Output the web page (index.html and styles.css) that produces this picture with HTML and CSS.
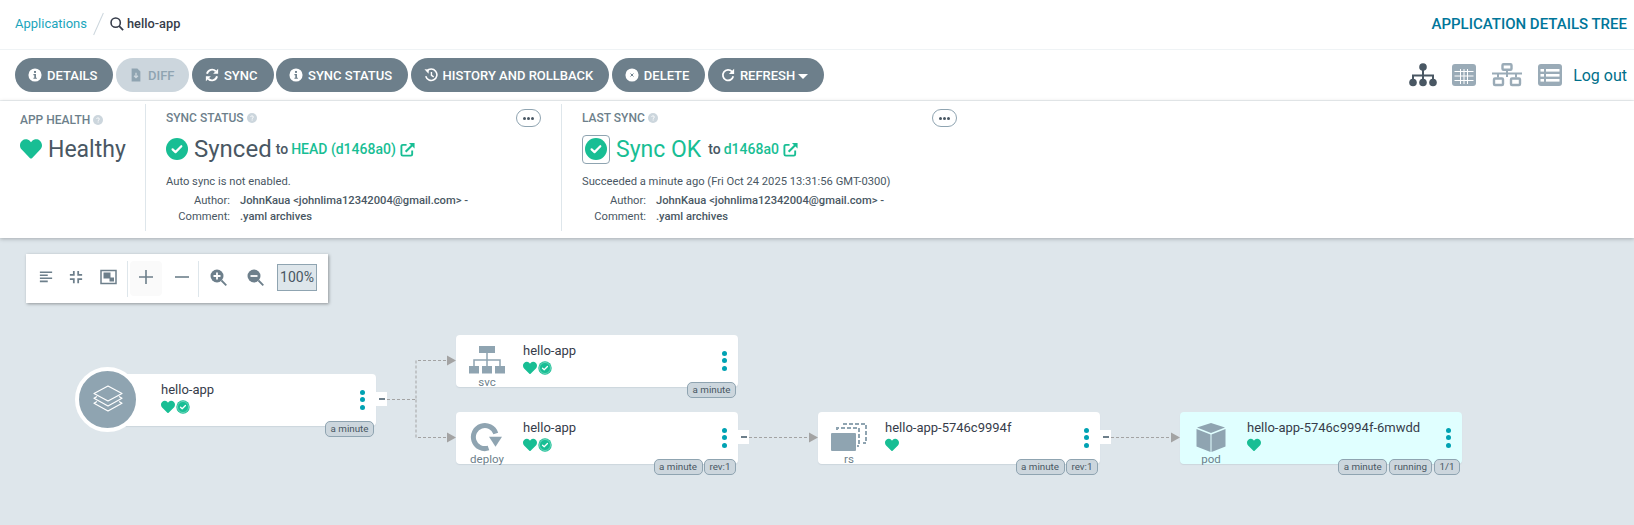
FILE: index.html
```html
<!DOCTYPE html>
<html lang="en">
<head>
  <meta charset="UTF-8">
  <title>hello-app</title>
  <link rel="stylesheet" href="styles.css">
</head>
<body>

  <svg class="defs" width="0" height="0">
    <defs>
      <symbol id="heart" viewBox="0 0 512 512"><path d="M462.3 62.6C407.5 15.9 326 24.3 275.7 76.2L256 96.5l-19.7-20.3C186.1 24.3 104.5 15.9 49.7 62.6c-62.8 53.6-66.1 149.8-9.9 207.9l193.5 199.8c12.5 12.9 32.8 12.9 45.3 0l193.5-199.8c56.3-58.1 53-154.3-9.8-207.9z"/></symbol>
      <symbol id="check" viewBox="0 0 24 24"><circle cx="12" cy="12" r="12" fill="#18be94"/><path d="M7.2 12.4l3.2 3 6.3-6.4" fill="none" stroke="#fff" stroke-width="2.4" stroke-linecap="round" stroke-linejoin="round"/></symbol>
      <symbol id="info" viewBox="0 0 16 16"><circle cx="8" cy="8" r="7.5" fill="#fff"/><rect x="6.9" y="3.4" width="2.2" height="2.2" fill="#6d7f8b"/><path d="M6.2 6.8h2.9v4.2h1v1.4H6.2V11h1V8.2h-1z" fill="#6d7f8b"/></symbol>
      <symbol id="help" viewBox="0 0 16 16"><circle cx="8" cy="8" r="8" fill="#ccd6dd"/><path d="M5.8 6.4C6 5 7 4.6 8 4.6c1.300 0 2.200.8 2.200 1.800 0 1.500-2 1.500-2 3" fill="none" stroke="#fff" stroke-width="1.400"/><rect x="7.400" y="10.400" width="1.600" height="1.600" fill="#fff"/></symbol>
      <symbol id="external" viewBox="0 0 16 16"><path d="M7 3H3a1.500 1.500 0 0 0-1.500 1.500v8.500A1.500 1.500 0 0 0 3 14.500h8.500A1.500 1.500 0 0 0 13 13V9" fill="none" stroke="currentColor" stroke-width="2"/><path d="M6 10.500L13.500 3" stroke="currentColor" stroke-width="2.200"/><path d="M9.500 1h6v6z" fill="currentColor"/></symbol>
      <symbol id="tree-status" viewBox="0 0 24 24"><circle cx="12" cy="12" r="11.500" fill="#18be94"/><circle cx="12" cy="12" r="9.500" fill="none" stroke="#fff" stroke-width=".6"/><path d="M7.800 12.400l2.800 2.600 5.600-5.600" fill="none" stroke="#fff" stroke-width="2.200" stroke-linecap="round" stroke-linejoin="round"/></symbol>
    </defs>
  </svg>

  <div class="top-bar">
    <div class="crumbs">
      <a class="crumb-link">Applications</a>
      <span class="crumb-slash"></span>
      <svg class="search-icon" viewBox="0 0 16 16"><circle cx="6.500" cy="6.500" r="5.300" fill="none" stroke="#363c4a" stroke-width="1.800"/><path d="M10.500 10.500l4.500 4.500" stroke="#363c4a" stroke-width="2"/></svg>
      <span class="crumb-app">hello-app</span>
    </div>
    <div class="page-title">APPLICATION DETAILS TREE</div>
  </div>

  <div class="toolbar">
    <div class="actions">
      <button class="btn"><svg class="btn-icon"><use href="#info"/></svg>DETAILS</button>
      <button class="btn btn-off">
        <svg class="btn-icon" viewBox="0 0 16 16"><path d="M3 .5h6.500L13 4v11.500H3z" fill="#8fa4b1"/><path d="M8 5.500v5M5.800 8.800L8 11l2.200-2.200" fill="none" stroke="#ccd6dd" stroke-width="1.500"/></svg>DIFF</button>
      <button class="btn">
        <svg class="btn-icon" viewBox="0 0 16 16"><path d="M2.300 6.600A5.900 5.900 0 0 1 12.300 3.700" fill="none" stroke="#fff" stroke-width="2.200"/><path d="M15 .8v5.700H9.300z" fill="#fff"/><path d="M13.700 9.400A5.900 5.900 0 0 1 3.700 12.300" fill="none" stroke="#fff" stroke-width="2.200"/><path d="M1 15.200V9.500h5.700z" fill="#fff"/></svg>SYNC</button>
      <button class="btn"><svg class="btn-icon"><use href="#info"/></svg>SYNC STATUS</button>
      <button class="btn">
        <svg class="btn-icon" viewBox="0 0 16 16"><path d="M3.200 3.600A6.500 6.500 0 1 1 2 9.500" fill="none" stroke="#fff" stroke-width="1.800"/><path d="M.5 1.500l5 .3-.3 4.700z" fill="#fff"/><path d="M8.500 4.500v4l2.600 1.700" fill="none" stroke="#fff" stroke-width="1.600"/></svg>HISTORY AND ROLLBACK</button>
      <button class="btn">
        <svg class="btn-icon" viewBox="0 0 16 16"><circle cx="8" cy="8" r="7.500" fill="#fff"/><path d="M6.300 6.300l3.400 3.400M9.700 6.300l-3.400 3.400" stroke="#6d7f8b" stroke-width="1.100"/></svg>DELETE</button>
      <button class="btn">
        <svg class="btn-icon" viewBox="0 0 16 16"><path d="M12.600 4.200A6 6 0 1 0 14 9.500" fill="none" stroke="#fff" stroke-width="2"/><path d="M15 .8v6H9z" fill="#fff"/></svg>REFRESH<span class="caret"></span></button>
    </div>
    <div class="views">
      <svg class="view-icon view-tree" viewBox="0 0 28 24"><g fill="#495763"><circle cx="14" cy="4" r="3.800"/><circle cx="4" cy="19.500" r="3.800"/><circle cx="14" cy="19.500" r="3.800"/><circle cx="24" cy="19.500" r="3.800"/></g><path d="M14 6v12M4 18v-5.500h20V18" fill="none" stroke="#495763" stroke-width="2"/></svg>
      <svg class="view-icon view-grid" viewBox="0 0 24 22"><rect width="24" height="22" rx="3" fill="#9aabb7"/><path d="M2.500 7.500h19M2.500 12h19M2.500 16.500h19M8.500 5v15M12 5v15M15.500 5v15" stroke="#fff" stroke-width="1"/></svg>
      <svg class="view-icon view-net" viewBox="0 0 30 24"><path d="M15 8v6M0 10.500h30M6 10.500v4M24 10.500v4" stroke="#9aabb7" stroke-width="2"/><g fill="none" stroke="#9aabb7" stroke-width="2.400"><rect x="10.500" y="1.200" width="9" height="5.500" rx="1"/><rect x="2" y="15.500" width="9" height="6.500" rx="1"/><rect x="19" y="15.500" width="9" height="6.500" rx="1"/></g></svg>
      <svg class="view-icon view-list" viewBox="0 0 24 22"><rect width="24" height="22" rx="3" fill="#9aabb7"/><g fill="#fff"><rect x="2.500" y="5" width="3.500" height="2.600"/><rect x="2.500" y="10" width="3.500" height="2.600"/><rect x="2.500" y="15" width="3.500" height="2.600"/><rect x="8" y="5" width="13.500" height="2.600"/><rect x="8" y="10" width="13.500" height="2.600"/><rect x="8" y="15" width="13.500" height="2.600"/></g></svg>
      <a class="logout">Log out</a>
    </div>
  </div>

  <div class="summary">
    <div class="panel panel-health">
      <div class="panel-label">APP HEALTH <svg class="help-icon"><use href="#help"/></svg></div>
      <div class="status-line">
        <svg class="health-heart"><use href="#heart"/></svg>
        <span class="status-big status-healthy">Healthy</span>
      </div>
    </div>

    <div class="panel panel-sync">
      <div class="panel-label">SYNC STATUS <svg class="help-icon"><use href="#help"/></svg></div>
      <button class="more-btn"><i></i><i></i><i></i></button>
      <div class="status-line">
        <svg class="status-check"><use href="#check"/></svg>
        <span class="status-big">Synced</span>
        <span class="status-to">to</span>
        <a class="status-link">HEAD (d1468a0)</a>
        <svg class="ext-icon"><use href="#external"/></svg>
      </div>
      <div class="status-note">Auto sync is not enabled.</div>
      <div class="meta">
        <span class="meta-key">Author:</span><span class="meta-val">JohnKaua &lt;johnlima12342004@gmail.com&gt; -</span>
        <span class="meta-key">Comment:</span><span class="meta-val">.yaml archives</span>
      </div>
    </div>

    <div class="panel panel-last">
      <div class="panel-label">LAST SYNC <svg class="help-icon"><use href="#help"/></svg></div>
      <button class="more-btn"><i></i><i></i><i></i></button>
      <div class="status-line">
        <span class="check-box"><svg class="status-check"><use href="#check"/></svg></span>
        <span class="status-big status-ok">Sync OK</span>
        <span class="status-to">to</span>
        <a class="status-link">d1468a0</a>
        <svg class="ext-icon"><use href="#external"/></svg>
      </div>
      <div class="status-note">Succeeded a minute ago (Fri Oct 24 2025 13:31:56 GMT-0300)</div>
      <div class="meta">
        <span class="meta-key">Author:</span><span class="meta-val">JohnKaua &lt;johnlima12342004@gmail.com&gt; -</span>
        <span class="meta-key">Comment:</span><span class="meta-val">.yaml archives</span>
      </div>
    </div>
  </div>

  <div class="canvas">
    <div class="graph-tools">
      <svg class="tool-icon" viewBox="0 0 16 16"><path d="M1 2.500h14M1 6h9M1 9.500h14M1 13h9" stroke="#6d7f8b" stroke-width="1.800"/></svg>
      <svg class="tool-icon tool-compress" viewBox="0 0 16 16"><path d="M5.500 1v4.500H1M10.500 1v4.500H15M5.500 15v-4.500H1M10.500 15v-4.500H15" fill="none" stroke="#6d7f8b" stroke-width="2"/></svg>
      <svg class="tool-icon tool-fit" viewBox="0 0 18 16"><rect x="1.500" y="1.500" width="15" height="13" fill="none" stroke="#6d7f8b" stroke-width="1.500"/><rect x="4" y="3.500" width="7" height="6" fill="#6d7f8b"/><rect x="10" y="8.500" width="4.500" height="4" fill="#6d7f8b"/></svg>
      <span class="tool-sep"></span>
      <span class="tool-plus"><svg class="tool-icon" viewBox="0 0 14 14"><path d="M7 0v14M0 7h14" stroke="#6d7f8b" stroke-width="1.600"/></svg></span>
      <span class="tool-minus"><svg class="tool-icon" viewBox="0 0 14 14"><path d="M0 7h14" stroke="#6d7f8b" stroke-width="1.600"/></svg></span>
      <span class="tool-sep"></span>
      <svg class="tool-icon tool-zoom" viewBox="0 0 17 17"><circle cx="7" cy="7" r="6.500" fill="#6d7f8b"/><path d="M11.500 11.500l4.800 4.800" stroke="#6d7f8b" stroke-width="1.800"/><path d="M3.500 7h7M7 3.500v7" stroke="#fff" stroke-width="1.800"/></svg>
      <svg class="tool-icon tool-zoom tool-zoom-out" viewBox="0 0 17 17"><circle cx="7" cy="7" r="6.500" fill="#6d7f8b"/><path d="M11.500 11.500l4.800 4.800" stroke="#6d7f8b" stroke-width="1.800"/><path d="M3.500 7h7" stroke="#fff" stroke-width="1.800"/></svg>
      <span class="zoom-level">100%</span>
    </div>

    <svg class="edges" width="1634" height="287" viewBox="0 238 1634 287">
      <g class="edge-lines">
        <path d="M387 399.500H416V360.500H448"/>
        <path d="M416 399.500V437.500H448"/>
        <path d="M749 437.500H810"/>
        <path d="M1111 437.500H1172"/>
      </g>
      <g class="edge-heads">
        <path d="M447 355.500l9 5-9 5z"/>
        <path d="M447 432.500l9 5-9 5z"/>
        <path d="M809 432.500l9 5-9 5z"/>
        <path d="M1171 432.500l9 5-9 5z"/>
      </g>
    </svg>

    <div class="node node-app">
      <div class="app-circle">
        <svg class="app-layers" viewBox="0 0 32 30"><g fill="none" stroke="#fff" stroke-width="1.200" stroke-linejoin="round"><path d="M16 1L30 8.500 16 16 2 8.500z"/><path d="M5 11.500l-3 1.800L16 21l14-7.700-3-1.800"/><path d="M5 16.500l-3 1.800L16 26l14-7.700-3-1.800"/></g></svg>
      </div>
      <div class="node-text">
        <div class="node-name">hello-app</div>
        <div class="node-status"><svg class="mini-heart"><use href="#heart"/></svg><svg class="mini-check"><use href="#tree-status"/></svg></div>
      </div>
      <div class="node-dots"><i></i><i></i><i></i></div>
      <span class="collapse"></span>
      <div class="tags"><span class="tag">a minute</span></div>
    </div>

    <div class="node node-svc">
      <div class="node-kind">
        <svg class="kind-icon" viewBox="0 0 36 29"><rect x="10" y="0" width="16" height="7" fill="#8fa4b1"/><path d="M18 7v7M5 21v-7h26v7M18 14v7" fill="none" stroke="#8fa4b1" stroke-width="1.500"/><rect x="0" y="20" width="10" height="7.500" fill="#8fa4b1"/><rect x="13" y="20" width="10" height="7.500" fill="#8fa4b1"/><rect x="26" y="20" width="10" height="7.500" fill="#8fa4b1"/></svg>
        <span class="kind-label">svc</span>
      </div>
      <div class="node-text">
        <div class="node-name">hello-app</div>
        <div class="node-status"><svg class="mini-heart"><use href="#heart"/></svg><svg class="mini-check"><use href="#tree-status"/></svg></div>
      </div>
      <div class="node-dots"><i></i><i></i><i></i></div>
      <div class="tags"><span class="tag">a minute</span></div>
    </div>

    <div class="node node-deploy">
      <div class="node-kind">
        <svg class="kind-icon" viewBox="0 0 36 29"><path d="M26.800 10.500A11.500 11.500 0 1 0 19.500 25" fill="none" stroke="#8fa4b1" stroke-width="5"/><path d="M20 13.700h13l-6.500 10z" fill="#8fa4b1"/></svg>
        <span class="kind-label">deploy</span>
      </div>
      <div class="node-text">
        <div class="node-name">hello-app</div>
        <div class="node-status"><svg class="mini-heart"><use href="#heart"/></svg><svg class="mini-check"><use href="#tree-status"/></svg></div>
      </div>
      <div class="node-dots"><i></i><i></i><i></i></div>
      <span class="collapse"></span>
      <div class="tags"><span class="tag">a minute</span><span class="tag">rev:1</span></div>
    </div>

    <div class="node node-rs">
      <div class="node-kind">
        <svg class="kind-icon" viewBox="0 0 36 29"><g fill="none" stroke="#8fa4b1" stroke-width="2" stroke-dasharray="4 2"><path d="M12 1H35V20H32"/><path d="M6 7V5H28V23H26"/></g><rect x="0" y="10" width="25" height="18" rx="1" fill="#8fa4b1"/></svg>
        <span class="kind-label">rs</span>
      </div>
      <div class="node-text">
        <div class="node-name">hello-app-5746c9994f</div>
        <div class="node-status"><svg class="mini-heart"><use href="#heart"/></svg></div>
      </div>
      <div class="node-dots"><i></i><i></i><i></i></div>
      <span class="collapse"></span>
      <div class="tags"><span class="tag">a minute</span><span class="tag">rev:1</span></div>
    </div>

    <div class="node node-pod">
      <div class="node-kind">
        <svg class="kind-icon" viewBox="0 0 36 29"><g fill="#8fa4b1"><path d="M18 0L32 4.500 18 10 4 4.500z"/><path d="M3.500 6l14 5.500v17.500l-14-5.500z"/><path d="M32.500 6l-14 5.500v17.500l14-5.500z"/></g></svg>
        <span class="kind-label">pod</span>
      </div>
      <div class="node-text">
        <div class="node-name">hello-app-5746c9994f-6mwdd</div>
        <div class="node-status"><svg class="mini-heart"><use href="#heart"/></svg></div>
      </div>
      <div class="node-dots"><i></i><i></i><i></i></div>
      <div class="tags"><span class="tag">a minute</span><span class="tag">running</span><span class="tag">1/1</span></div>
    </div>
  </div>

</body>
</html>
```

FILE: styles.css
```css
* {
  box-sizing: border-box;
}

html, body {
  height: 100%;
}

body {
  margin: 0;
  font-family: Roboto, "Liberation Sans", sans-serif;
  color: #495763;
  background: #dee6eb;
  overflow: hidden;
  display: flex;
  flex-direction: column;
}

.defs {
  position: absolute;
}

/* top bar */
.top-bar {
  height: 50px;
  flex: none;
  background: #fff;
  border-bottom: 1px solid #eff3f5;
  display: flex;
  align-items: center;
  justify-content: space-between;
  padding: 0 7px 2px 15px;
}

.crumbs {
  display: flex;
  align-items: center;
}

.crumb-link {
  font-size: 13px;
  color: #1ba5bc;
}

.crumb-slash {
  width: 1px;
  height: 24px;
  margin: 0 11px 0 11px;
  background: #ccd6dd;
  transform: rotate(24deg);
}

.search-icon {
  width: 14px;
  height: 14px;
  margin-right: 3px;
}

.crumb-app {
  font-size: 12.8px;
  font-weight: 500;
  color: #363c4a;
}

.page-title {
  font-size: 15px;
  font-weight: 500;
  color: #00769a;
}

/* action row */
.toolbar {
  height: 51px;
  flex: none;
  background: #fff;
  border-bottom: 1px solid #eff3f5;
  display: flex;
  align-items: center;
  justify-content: space-between;
  padding: 0 7px 0 15px;
}

.actions {
  display: flex;
  gap: 2.5px;
}

.btn {
  height: 34px;
  border: none;
  border-radius: 17px;
  padding: 0 16px 0 13px;
  background: #6d7f8b;
  color: #fff;
  font-family: inherit;
  font-size: 13px;
  font-weight: 500;
  display: flex;
  align-items: center;
}

.btn-off {
  padding-right: 15px;
  background: #ccd6dd;
  color: #8fa4b1;
}

.btn-icon {
  width: 14px;
  height: 14px;
  margin-right: 5px;
}

.caret {
  margin: 2px 0 0 3px;
  border-left: 5px solid transparent;
  border-right: 5px solid transparent;
  border-top: 5px solid #fff;
}

.views {
  display: flex;
  align-items: center;
}

.view-icon {
  display: block;
}

.view-tree {
  width: 28px;
  height: 24px;
  margin-right: 15px;
}

.view-grid {
  width: 24px;
  height: 22px;
  margin-right: 16px;
}

.view-net {
  width: 30px;
  height: 24px;
  margin-right: 16px;
}

.view-list {
  width: 24px;
  height: 22px;
  margin-right: 11px;
}

.logout {
  font-size: 16px;
  color: #006f8a;
}

/* summary panels */
.summary {
  height: 137px;
  flex: none;
  background: #fff;
  box-shadow: 0 1px 4px rgba(0, 0, 0, 0.25);
  display: flex;
  padding-top: 3px;
  position: relative;
  z-index: 1;
}

.panel {
  position: relative;
  height: 127px;
  padding-left: 20px;
  border-right: 1px solid #dee6eb;
}

.panel-health {
  width: 146px;
}

.panel-sync {
  width: 416px;
}

.panel-last {
  width: 415px;
  border-right: none;
}

.panel-label {
  font-size: 12px;
  font-weight: 500;
  color: #6d7f8b;
  line-height: 14px;
  padding-top: 7px;
  display: flex;
  align-items: center;
  gap: 3px;
}

.panel-health .panel-label {
  padding-top: 9px;
}

.help-icon {
  width: 10px;
  height: 10px;
}

.more-btn {
  position: absolute;
  top: 5px;
  right: 20px;
  width: 25px;
  height: 18px;
  padding: 0;
  background: #fff;
  border: 1px solid #8fa4b1;
  border-radius: 9px;
  display: flex;
  align-items: center;
  justify-content: center;
  gap: 1px;
}

.more-btn i {
  width: 3px;
  height: 3px;
  border-radius: 50%;
  background: #495763;
}

.status-line {
  display: flex;
  align-items: center;
  height: 30px;
  margin-top: 9px;
}

.panel-health .status-line {
  margin-top: 7px;
}

.health-heart {
  width: 22px;
  height: 22px;
  fill: #18be94;
  margin-right: 6px;
}

.status-check {
  width: 22px;
  height: 22px;
  display: block;
}

.status-big {
  font-size: 24px;
  margin-left: 6px;
}

.status-healthy {
  font-size: 23px;
  margin-left: 0;
}

.status-ok {
  font-size: 23px;
  color: #18be94;
}

.status-to {
  font-size: 14px;
  font-weight: 500;
  margin-left: 4px;
}

.status-ok + .status-to {
  margin-left: 7px;
}

.status-link {
  font-size: 14px;
  font-weight: 500;
  color: #18be94;
  margin-left: 3px;
}

.ext-icon {
  width: 15px;
  height: 15px;
  color: #18be94;
  margin-left: 4px;
}

.check-box {
  width: 28px;
  height: 29px;
  border: 1px solid #8fa4b1;
  border-radius: 4px;
  display: flex;
  align-items: center;
  justify-content: center;
}

.status-note {
  font-size: 11.2px;
  line-height: 14px;
  margin-top: 11px;
}

.meta {
  display: grid;
  grid-template-columns: 64px auto;
  column-gap: 10px;
  justify-content: start;
  font-size: 11.2px;
  line-height: 16px;
  margin-top: 4px;
}

.meta-key {
  text-align: right;
}

.meta-val {
  font-weight: 500;
}

/* graph canvas */
.canvas {
  position: relative;
  flex: 1;
  background: #dee6eb;
}

.graph-tools {
  margin: 16px 0 0 26px;
  width: 302px;
  height: 49px;
  background: #fff;
  box-shadow: 1px 1px 3px rgba(0, 0, 0, 0.35);
  display: flex;
  align-items: center;
  padding-left: 13px;
}

.graph-tools > .tool-icon,
.tool-minus,
.tool-plus .tool-icon,
.zoom-level {
  position: relative;
  top: -1.5px;
}

.tool-icon {
  width: 14px;
  height: 14px;
  display: block;
}

.tool-compress {
  margin-left: 16px;
}

.tool-fit {
  width: 19px;
  height: 16px;
  margin-left: 16px;
}

.tool-sep {
  width: 1px;
  height: 36px;
  background: #dee6eb;
  margin-left: 9px;
}

.tool-plus {
  width: 32px;
  height: 35px;
  margin-left: 2px;
  border-radius: 4px;
  background: #fafafa;
  display: flex;
  align-items: center;
  justify-content: center;
}

.tool-minus {
  width: 14px;
  margin-left: 13px;
}

.tool-zoom {
  width: 17px;
  height: 17px;
  margin-left: 11px;
}

.tool-zoom-out {
  margin-left: 20px;
}

.zoom-level {
  width: 40px;
  height: 27px;
  margin-left: 13px;
  background: #dee6eb;
  border: 1px solid #8fa4b1;
  font-size: 14px;
  line-height: 25px;
  text-align: center;
}

.edges {
  position: absolute;
  left: 0;
  top: 0;
}

.edge-lines path {
  fill: none;
  stroke: #a3a3a3;
  stroke-width: 1;
  stroke-dasharray: 3 2;
}

.edge-heads path {
  fill: #a3a3a3;
}

/* nodes sit on a free canvas, so they carry their own coordinates */
.node {
  position: absolute;
  width: 282px;
  height: 52px;
  background: #fff;
  border-radius: 4px;
  box-shadow: 0 1px 1px #ccd6dd;
  display: flex;
}

.node-svc {
  left: 456px;
  top: 97px;
}

.node-deploy {
  left: 456px;
  top: 174px;
}

.node-rs {
  left: 818px;
  top: 174px;
}

.node-pod {
  left: 1180px;
  top: 174px;
  background: #e0ffff;
}

.node-app {
  left: 107px;
  top: 136px;
  width: 269px;
  padding-left: 54px;
}

.app-circle {
  position: absolute;
  left: -32px;
  top: -7px;
  width: 65px;
  height: 65px;
  border-radius: 50%;
  background: #8fa4b1;
  border: 4px solid #fff;
  display: flex;
  align-items: center;
  justify-content: center;
}

.app-layers {
  width: 32px;
  height: 30px;
}

.node-kind {
  width: 62px;
  margin-right: 5px;
  flex: none;
  padding-top: 11px;
  display: flex;
  flex-direction: column;
  align-items: center;
}

.kind-icon {
  width: 36px;
  height: 29px;
  flex: none;
  display: block;
}

.kind-label {
  font-size: 11.5px;
  line-height: 14px;
  color: #6d7f8b;
}

.node-text {
  flex: 1;
  padding-top: 8px;
}

.node-name {
  font-size: 13px;
  line-height: 16px;
  color: #363c4a;
}

.node-status {
  display: flex;
  align-items: center;
  gap: 1px;
  margin-top: 2px;
}

.mini-heart {
  width: 14px;
  height: 14px;
  fill: #18be94;
}

.mini-check {
  width: 14px;
  height: 14px;
}

.node-dots {
  width: 5px;
  margin: 16px 11px 0 0;
  display: flex;
  flex-direction: column;
  gap: 2.3px;
}

.node-dots i {
  width: 5px;
  height: 5px;
  border-radius: 50%;
  background: #00a2b3;
}

.collapse {
  position: absolute;
  left: 100%;
  top: 18px;
  width: 11px;
  height: 14px;
  background: #fff;
  display: flex;
  align-items: center;
  justify-content: center;
}

.collapse::before {
  content: "";
  width: 6px;
  height: 2px;
  background: #6d7f8b;
}

.tags {
  position: absolute;
  right: 2px;
  top: 47px;
  display: flex;
  gap: 1.500px;
}

.tag {
  height: 15.500px;
  padding: 0 4.500px;
  font-size: 9.800px;
  line-height: 14px;
  color: #495763;
  background: #ccd6dd;
  border: 1px solid #8fa4b1;
  border-radius: 5px;
}
```
